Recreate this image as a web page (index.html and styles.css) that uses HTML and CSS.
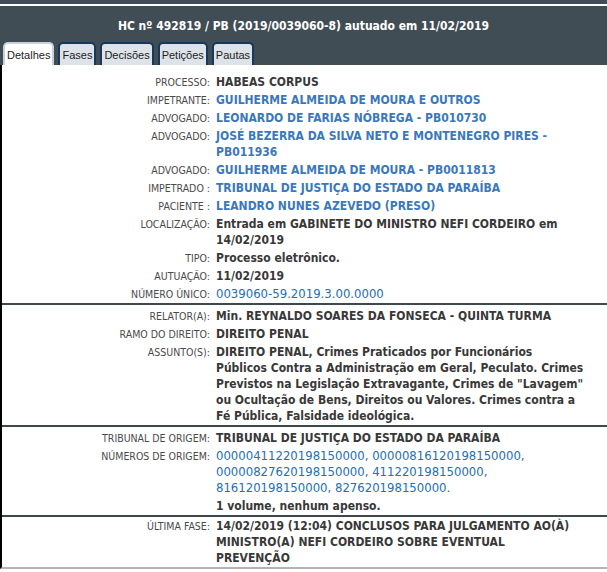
FILE: index.html
```html
<!DOCTYPE html>
<html>
  <head>
    <meta charset="utf-8">
    <title>HC 492819 / PB</title>
    <link rel="stylesheet" href="styles.css">
  </head>
  <body>
    <div class="topo">
      <div class="faixa"></div>
      <div class="cabecalho">
        <h1 class="titulo">HC nº 492819 / PB (2019/0039060-8) autuado em 11/02/2019</h1>
        <div class="abas">
          <span class="aba ativa">Detalhes</span>
          <span class="aba">Fases</span>
          <span class="aba">Decisões</span>
          <span class="aba">Petições</span>
          <span class="aba">Pautas</span>
        </div>
      </div>
    </div>

    <div class="painel">
      <div class="bloco primeiro">
        <div class="linha"><span class="rotulo">PROCESSO:</span><span class="valor">HABEAS CORPUS</span></div>
        <div class="linha"><span class="rotulo">IMPETRANTE:</span><span class="valor azul">GUILHERME ALMEIDA DE MOURA E OUTROS</span></div>
        <div class="linha"><span class="rotulo">ADVOGADO:</span><span class="valor azul">LEONARDO DE FARIAS NÓBREGA - PB010730</span></div>
        <div class="linha"><span class="rotulo">ADVOGADO:</span><span class="valor azul">JOSÉ BEZERRA DA SILVA NETO E MONTENEGRO PIRES - PB011936</span></div>
        <div class="linha"><span class="rotulo">ADVOGADO:</span><span class="valor azul">GUILHERME ALMEIDA DE MOURA - PB0011813</span></div>
        <div class="linha"><span class="rotulo">IMPETRADO :</span><span class="valor azul">TRIBUNAL DE JUSTIÇA DO ESTADO DA PARAÍBA</span></div>
        <div class="linha"><span class="rotulo">PACIENTE :</span><span class="valor azul">LEANDRO NUNES AZEVEDO (PRESO)</span></div>
        <div class="linha"><span class="rotulo">LOCALIZAÇÃO:</span><span class="valor">Entrada em GABINETE DO MINISTRO NEFI CORDEIRO em 14/02/2019</span></div>
        <div class="linha"><span class="rotulo">TIPO:</span><span class="valor">Processo eletrônico.</span></div>
        <div class="linha"><span class="rotulo">AUTUAÇÃO:</span><span class="valor">11/02/2019</span></div>
        <div class="linha"><span class="rotulo">NÚMERO ÚNICO:</span><span class="valor"><span class="numero">0039060-59.2019.3.00.0000</span></span></div>
      </div>

      <div class="bloco">
        <div class="linha"><span class="rotulo">RELATOR(A):</span><span class="valor">Min. REYNALDO SOARES DA FONSECA - QUINTA TURMA</span></div>
        <div class="linha"><span class="rotulo">RAMO DO DIREITO:</span><span class="valor">DIREITO PENAL</span></div>
        <div class="linha"><span class="rotulo">ASSUNTO(S):</span><span class="valor">DIREITO PENAL, Crimes Praticados por Funcionários Públicos Contra a Administração em Geral, Peculato. Crimes Previstos na Legislação Extravagante, Crimes de "Lavagem" ou Ocultação de Bens, Direitos ou Valores. Crimes contra a Fé Pública, Falsidade ideológica.</span></div>
      </div>

      <div class="bloco">
        <div class="linha"><span class="rotulo">TRIBUNAL DE ORIGEM:</span><span class="valor">TRIBUNAL DE JUSTIÇA DO ESTADO DA PARAÍBA</span></div>
        <div class="linha"><span class="rotulo">NÚMEROS DE ORIGEM:</span><span class="valor"><span class="numero">00000411220198150000, 00000816120198150000, 00000827620198150000, 411220198150000, 816120198150000, 827620198150000.</span></span></div>
        <div class="linha"><span class="rotulo"></span><span class="valor">1 volume, nenhum apenso.</span></div>
      </div>

      <div class="bloco ultimo">
        <div class="linha"><span class="rotulo">ÚLTIMA FASE:</span><span class="valor">14/02/2019 (12:04) CONCLUSOS PARA JULGAMENTO AO(À) MINISTRO(A) NEFI CORDEIRO SOBRE EVENTUAL PREVENÇÃO</span></div>
      </div>
    </div>
  </body>
</html>
```

FILE: styles.css
```css
body {
  margin: 0;
  padding: 0;
  background: #fff;
  font-family: "DejaVu Sans Condensed", "DejaVu Sans", sans-serif;
}

.topo {
  background: #414d54;
}

.faixa {
  height: 4px;
  border-bottom: 2px solid #fff;
}

.cabecalho {
  padding-top: 11px;
}

.titulo {
  margin: 0;
  color: #fff;
  font-size: 12px;
  font-weight: bold;
  text-align: center;
  line-height: 18px;
}

.abas {
  display: flex;
  gap: 4px;
  padding: 7px 0 0 3px;
}

.aba {
  height: 21px;
  padding: 0 2px;
  border: 2px solid #17385d;
  border-bottom: none;
  border-radius: 5px 5px 0 0;
  background: #dde3e9;
  color: #1c1c1c;
  font-family: "Liberation Sans", Arial, sans-serif;
  font-size: 11px;
  line-height: 23px;
}

.aba.ativa {
  background: #fff;
  border-color: #c9d2da;
}

.painel {
  border-left: 2px solid #000;
  border-bottom: 2px solid #b4b4b4;
}

.bloco {
  padding-top: 2px;
  border-bottom: 2px solid #3c494f;
}

.bloco.primeiro {
  padding-top: 8px;
}

.bloco.ultimo {
  padding-top: 0;
  border-bottom: none;
}

.linha {
  display: flex;
  align-items: baseline;
  padding: 1px 0;
  line-height: 16px;
}

.rotulo {
  width: 214px;
  flex: none;
  text-align: right;
  color: #4a4a4a;
  font-size: 10.5px;
  padding-right: 6px;
  box-sizing: border-box;
}

.valor {
  width: 370px;
  color: #383838;
  font-size: 12px;
  font-weight: bold;
}

.bloco.ultimo .valor {
  width: 360px;
}

.azul {
  color: #3a78bb;
}

.numero {
  color: #236fb2;
  font-family: "DejaVu Sans", sans-serif;
  font-size: 11.7px;
  font-weight: normal;
}
```
